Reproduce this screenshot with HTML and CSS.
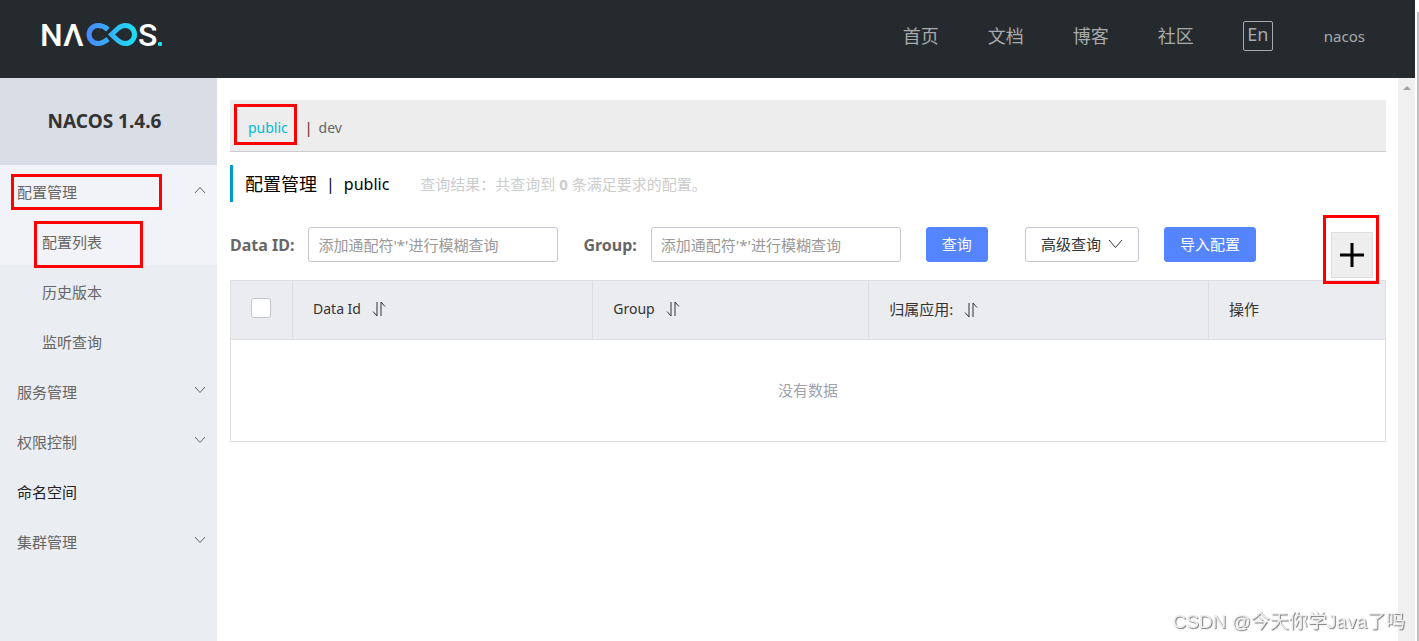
FILE: index.html
```html
<!DOCTYPE html>
<html lang="zh-CN">
<head>
<meta charset="utf-8">
<title>Nacos</title>
<link rel="stylesheet" href="styles.css">
</head>
<body>
<div class="page">
  <header class="header">
    <a class="logo" href="#">
      <svg width="124" height="40" viewBox="0 -5 124 40">
        <defs>
          <linearGradient id="loop" gradientUnits="userSpaceOnUse" x1="46" y1="0" x2="96" y2="0">
            <stop offset="0" stop-color="#4a86ff"/>
            <stop offset="1" stop-color="#1de0f2"/>
          </linearGradient>
        </defs>
        <text class="logo-text" x="0" y="25">N</text>
        <text class="logo-text" x="23" y="25">Λ</text>
        <path d="M68 8.500C64 5 61 4.500 58 4.500A9 9 0 0 0 58 22.500C61 22.500 64 21.500 68 18" fill="none" stroke="url(#loop)" stroke-width="5"/>
        <path d="M71.500 13.500L78 7.500C80.500 5.200 82.500 4.500 85.500 4.500A9 9 0 0 1 85.500 22.500C82.500 22.500 80.500 21.800 78 19.500Z" fill="none" stroke="url(#loop)" stroke-width="5"/>
        <text class="logo-text" x="98" y="25">S</text>
        <rect x="118" y="21" width="4" height="4" rx="1" fill="#1de0f2"/>
      </svg>
    </a>
    <nav class="nav">
      <a href="#">首页</a>
      <a href="#">文档</a>
      <a href="#">博客</a>
      <a href="#">社区</a>
      <button class="lang" type="button">En</button>
      <a class="user" href="#">nacos</a>
    </nav>
  </header>
  <div class="body">
    <aside class="sidebar">
      <h1 class="version">NACOS 1.4.6</h1>
      <ul class="menu">
        <li class="active"><a href="#">配置管理<svg class="arrow" viewBox="0 0 12 8"><path d="M1 7L6 1.500L11 7"/></svg></a><span class="mark mark-group"></span></li>
        <li class="sub active"><a href="#">配置列表</a><span class="mark mark-list"></span></li>
        <li class="sub"><a href="#">历史版本</a></li>
        <li class="sub"><a href="#">监听查询</a></li>
        <li><a href="#">服务管理<svg class="arrow" viewBox="0 0 12 8"><path d="M1 1L6 6.500L11 1"/></svg></a></li>
        <li><a href="#">权限控制<svg class="arrow" viewBox="0 0 12 8"><path d="M1 1L6 6.500L11 1"/></svg></a></li>
        <li class="dark"><a href="#">命名空间</a></li>
        <li><a href="#">集群管理<svg class="arrow" viewBox="0 0 12 8"><path d="M1 1L6 6.500L11 1"/></svg></a></li>
      </ul>
    </aside>
    <main class="main">
      <div class="namespaces">
        <a class="current" href="#">public<span class="mark mark-public"></span></a>
        <span class="bar">|</span>
        <a href="#">dev</a>
      </div>
      <h2 class="title"><span class="section">配置管理</span><span>|</span><span>public</span><small>查询结果：共查询到 <b>0</b> 条满足要求的配置。</small></h2>
      <form class="filters">
        <label for="data-id">Data ID:</label>
        <input class="field" id="data-id" type="text" placeholder="添加通配符'*'进行模糊查询">
        <label for="group">Group:</label>
        <input class="field" id="group" type="text" placeholder="添加通配符'*'进行模糊查询">
        <button class="btn primary search" type="button">查询</button>
        <button class="btn" type="button">高级查询<svg width="15" height="10" viewBox="0 0 15 10"><path d="M1 1L7.500 8.500L14 1"/></svg></button>
        <button class="btn primary" type="button">导入配置</button>
        <div class="create">
          <button class="add" type="button" aria-label="新建配置"><svg width="26" height="26" viewBox="0 0 26 26"><path d="M13 1V25M1 13H25"/></svg></button>
        </div>
      </form>
      <table class="table">
        <colgroup><col class="c-check"><col class="c-id"><col class="c-group"><col class="c-app"><col></colgroup>
        <thead>
          <tr>
            <th class="check"><input type="checkbox" aria-label="全选"></th>
            <th class="latin">Data Id<svg class="sort" viewBox="0 0 14 16"><path d="M5 1V15L1 10.500M9 15V1L13 5.500"/></svg></th>
            <th class="latin">Group<svg class="sort" viewBox="0 0 14 16"><path d="M5 1V15L1 10.500M9 15V1L13 5.500"/></svg></th>
            <th>归属应用:<svg class="sort" viewBox="0 0 14 16"><path d="M5 1V15L1 10.500M9 15V1L13 5.500"/></svg></th>
            <th>操作</th>
          </tr>
        </thead>
        <tbody><tr><td colspan="5">没有数据</td></tr></tbody>
      </table>
    </main>
    <div class="scroll"><i></i></div>
  </div>
</div>
<div class="outer-scroll"></div>
<div class="watermark">CSDN @今天你学Java了吗</div>
</body>
</html>
```
FILE: styles.css
```css
* { box-sizing: border-box; }
body {
  margin: 0;
  min-height: 100vh;
  display: flex;
  background: #fff;
  color: #333;
  font: 15px/20px "Noto Sans", "Noto Sans CJK SC", sans-serif;
}
a { color: inherit; text-decoration: none; }
button, input { font: inherit; }
svg { fill: none; stroke: currentColor; }

.page { flex: 1; min-width: 0; display: flex; flex-direction: column; }
.header {
  height: 78px;
  display: flex;
  align-items: center;
  justify-content: space-between;
  padding: 0 50px 6px 40px;
  background: #252a2f;
  color: #a8aaac;
}
.logo { display: flex; }
.logo svg { stroke: none; }
.logo-text { font: 500 32px Roboto, sans-serif; fill: #fff; }
.nav { display: flex; align-items: center; gap: 49px; font-size: 18px; }
.lang {
  width: 30px;
  height: 30px;
  padding: 0 0 4px;
  border: 1px solid #a8aaac;
  border-radius: 2px;
  background: none;
  color: inherit;
  line-height: 24px;
}
.user { margin-left: 2px; font-size: 15px; }

.body { flex: 1; display: flex; }
.sidebar { width: 217px; flex: none; background: #eaedf2; color: #666; }
.version {
  margin: 0;
  height: 87px;
  background: #d9dde5;
  color: #333;
  text-align: center;
  font-size: 19px;
  font-weight: 700;
  line-height: 87px;
  padding-right: 8px;
}
.menu { list-style: none; margin: 0; padding: 0; }
.menu li { position: relative; }
.menu a {
  display: flex;
  align-items: center;
  justify-content: space-between;
  height: 50px;
  padding: 4px 11px 0 17px;
}
.menu .sub a { padding-left: 42px; }
.menu .active { background: #f1f3f8; }
.menu .dark { color: #222; }
.arrow { width: 12px; height: 8px; margin-bottom: 4px; }

.mark { position: absolute; border: 3px solid #f00; pointer-events: none; }
.mark-group { left: 11px; top: 9px; width: 151px; height: 36px; }
.mark-list { left: 34px; top: 6px; width: 109px; height: 47px; z-index: 1; }
.mark-public { left: -14px; top: -14px; width: 63px; height: 41px; }

.main { flex: 1; min-width: 0; padding: 22px 12px 0 13px; }
.namespaces {
  display: flex;
  align-items: center;
  height: 52px;
  padding: 4px 18px 0;
  background: #ededed;
  border-bottom: 1px solid #ccc;
  color: #666;
  font-size: 14px;
}
.current { position: relative; color: #00bcd9; }
.bar { color: #522; margin: 0 6px 0 17px; }
.title {
  display: flex;
  align-items: center;
  gap: 9px;
  height: 37px;
  margin: 13px 0 25px;
  padding-left: 12px;
  border-left: 3px solid #09c;
  color: #000;
  font-size: 16px;
  font-weight: 400;
}
.section { font-size: 18px; }
.title small { margin-left: 22px; color: #ccc; font-size: 15px; }

.filters { position: relative; display: flex; align-items: center; margin-bottom: 18px; }
.filters label { margin-right: 14px; color: #666; font-size: 16px; font-weight: 700; }
.field {
  width: 250px;
  height: 35px;
  margin-right: 25px;
  padding: 0 9px;
  border: 1px solid #c4c6cf;
  border-radius: 3px;
  color: #333;
}
.field::placeholder { color: #999; }
.btn {
  display: flex;
  align-items: center;
  gap: 7px;
  height: 35px;
  margin-right: 25px;
  padding: 0 15px 2px;
  border: 1px solid #c4c6cf;
  border-radius: 3px;
  background: #fff;
  color: #333;
}
.primary { border-color: #5584ff; background: #5584ff; color: #fff; }
.search { margin-right: 37px; }
.create {
  position: absolute;
  right: 7px;
  top: -12px;
  padding: 14px 3px 3px 5px;
  border: 3px solid #f00;
}
.add {
  display: flex;
  align-items: center;
  justify-content: center;
  width: 42px;
  height: 46px;
  padding: 0;
  border: 1px solid #ddd;
  background: #eee;
  color: #000;
}
.add svg { stroke-width: 3; }

.table { width: 100%; table-layout: fixed; border-collapse: collapse; border: 1px solid #dcdee3; }
.c-check { width: 62px; }
.c-id { width: 26%; }
.c-group { width: 23.9%; }
.c-app { width: 29.4%; }
.table th {
  height: 59px;
  padding: 0 20px 2px;
  border: 1px solid #dcdee3;
  background: #ebecf0;
  text-align: left;
  font-weight: 400;
}
.table .latin { font-size: 14px; }
.table .check { padding: 0 2px 5px 0; text-align: center; }
.check input {
  appearance: none;
  width: 20px;
  height: 20px;
  margin: 0;
  border: 1px solid #c4c6cf;
  border-radius: 3px;
  background: #fff;
  vertical-align: middle;
}
.sort { width: 14px; height: 16px; margin-left: 11px; vertical-align: -3px; }
.table td { height: 102px; padding: 0 0 2px; text-align: center; color: #a0a2ad; }

.scroll { width: 17px; flex: none; background: #f0f0f0; display: flex; justify-content: center; padding-top: 8px; }
.scroll i { width: 0; height: 0; border: 4px solid transparent; border-top: 0; border-bottom-color: #a0a0a0; }
.outer-scroll { width: 2px; margin: 12px 0 0 2px; background: #c1c1c1; }
.watermark {
  position: fixed;
  right: 14px;
  bottom: 7px;
  color: #eee;
  font: 19px/24px "Liberation Sans", "Noto Sans CJK SC", sans-serif;
  text-shadow: 1px 1px 1px #777;
}
```
